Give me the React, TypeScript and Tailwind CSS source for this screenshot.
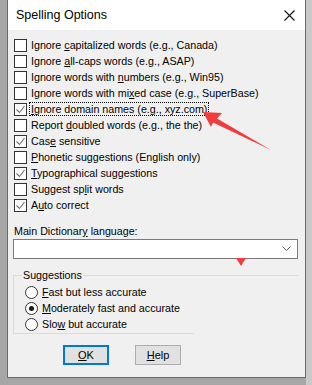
import React from "react";

const U = ({ children }: { children: React.ReactNode }) => (
  <span className="underline underline-offset-[1px] decoration-1">{children}</span>
);

function Check({ checked }: { checked?: boolean }) {
  return (
    <span className="w-[13px] h-[13px] border border-[#333333] bg-white shrink-0 flex items-center justify-center">
      {checked && (
        <svg width="11" height="11" viewBox="0 0 11 11">
          <polyline points="1.5,5.5 4.5,8.5 9.5,2" fill="none" stroke="#6d6d6d" strokeWidth="1.1" />
        </svg>
      )}
    </span>
  );
}

function Row({ checked, children, focus }: { checked?: boolean; children: React.ReactNode; focus?: boolean }) {
  return (
    <div className="h-[16px] flex items-center gap-[4px]">
      <Check checked={checked} />
      {focus ? (
        <span className="border border-dotted border-black ml-[-2px] px-[1px] leading-[12px]">{children}</span>
      ) : (
        <span>{children}</span>
      )}
    </div>
  );
}

function Radio({ checked, children }: { checked?: boolean; children: React.ReactNode }) {
  return (
    <div className="h-[16px] flex items-center gap-[4px]">
      <span className="w-[13px] h-[13px] rounded-full border border-[#333333] bg-white flex items-center justify-center shrink-0">
        {checked && <span className="w-[5px] h-[5px] rounded-full bg-[#1a1a1a]" />}
      </span>
      <span>{children}</span>
    </div>
  );
}

export default function App() {
  return (
    <div className="relative w-[312px] h-[385px] bg-[#a6a6a6] overflow-hidden" style={{ fontFamily: '"Liberation Sans", Arial, sans-serif' }}>
      <div className="absolute left-[306px] top-0 w-[6px] h-[385px] bg-[#c9c9c9]" />
      <div className="relative ml-[7px] w-[299px] h-[378px] border-x border-b border-[#1a7fd4] bg-[#f0f0f0] text-[10.7px] text-black flex flex-col">
        <div className="h-[30px] bg-white flex items-center justify-between pl-[8px] pr-[10px] shrink-0">
          <span className="text-[12.5px] text-black">Spelling Options</span>
          <svg width="11" height="11" viewBox="0 0 11 11">
            <path d="M0.5 0.5 L10.5 10.5 M10.5 0.5 L0.5 10.5" stroke="#111" strokeWidth="1.1" />
          </svg>
        </div>
        <div className="pt-[7px] pl-[6px] flex flex-col">
          <Row>Ignore <U>c</U>apitalized words (e.g., Canada)</Row>
          <Row>Ignore <U>a</U>ll-caps words (e.g., ASAP)</Row>
          <Row>Ignore words with <U>n</U>umbers (e.g., Win95)</Row>
          <Row>Ignore words with mi<U>x</U>ed case (e.g., SuperBase)</Row>
          <Row checked focus><U>I</U>gnore domain names (e.g., xyz.com)</Row>
          <Row>Report <U>d</U>oubled words (e.g., the the)</Row>
          <Row checked>Cas<U>e</U> sensitive</Row>
          <Row><U>P</U>honetic suggestions (English only)</Row>
          <Row checked><U>T</U>ypographical suggestions</Row>
          <Row>Suggest sp<U>l</U>it words</Row>
          <Row checked>A<U>u</U>to correct</Row>
        </div>
        <div className="mt-[10px] ml-[6px] h-[16px] flex items-center">
          <span>Main Dictionar<U>y</U> language:</span>
        </div>
        <div className="ml-[5px] w-[285px] h-[20px] bg-white border border-[#7a7a7a] flex items-center justify-end pr-[6px]">
          <svg width="9" height="6" viewBox="0 0 9 6">
            <polyline points="0.5,0.5 4.5,4.5 8.5,0.5" fill="none" stroke="#555" strokeWidth="1" />
          </svg>
        </div>
        <fieldset className="mt-[8px] ml-[5px] w-[285px] border-t border-l border-[#dcdcdc]">
          <legend className="ml-[8px] px-[1px] h-[16px] leading-[16px]">Suggestions</legend>
          <div className="mt-[1px] ml-[11px] flex flex-col">
            <Radio><U>F</U>ast but less accurate</Radio>
            <Radio checked><U>M</U>oderately fast and accurate</Radio>
            <Radio>Slo<U>w</U> but accurate</Radio>
          </div>
          <div className="mt-[1px] w-[180px] h-[1px] bg-[#dcdcdc]" />
        </fieldset>
        <div className="mt-[11px] ml-[55px] flex gap-[26px]">
          <button className="w-[46px] h-[20px] bg-[#e1e1e1] border-2 border-[#0078d7] flex items-center justify-center text-[11px]">
            <span><U>O</U>K</span>
          </button>
          <button className="w-[46px] h-[20px] bg-[#e1e1e1] border border-[#adadad] flex items-center justify-center text-[11px]">
            <span><U>H</U>elp</span>
          </button>
        </div>
      </div>
      <svg className="absolute left-0 top-0 pointer-events-none" width="312" height="385" viewBox="0 0 312 385">
        <polygon points="203,112 222,113 217,118.5 271,150 213,122.5 211,127" fill="#f23c3c" />
        <polygon points="236,258 246,258 241,266" fill="#f23c3c" />
      </svg>
    </div>
  );
}
